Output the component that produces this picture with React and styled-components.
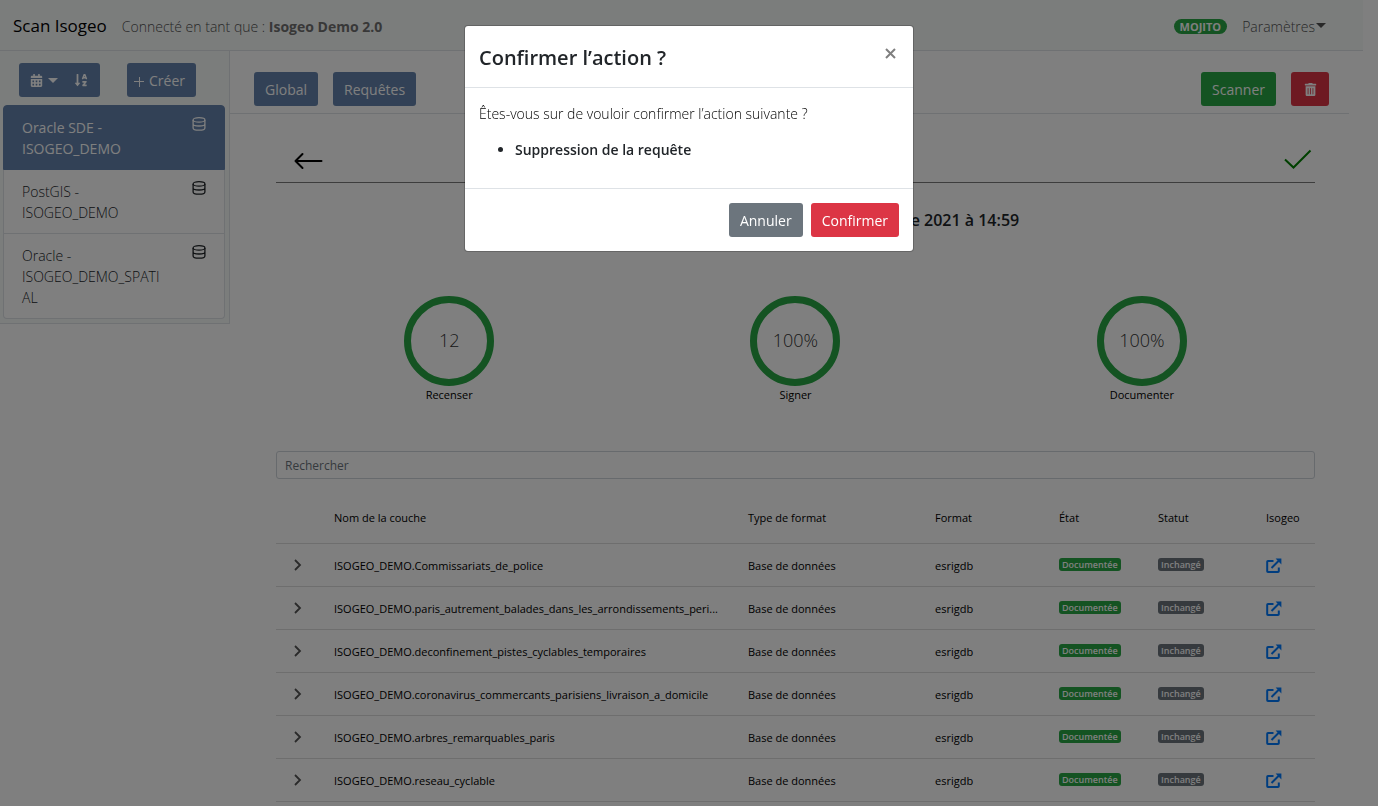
import React from 'react';
import styled, { createGlobalStyle, css } from 'styled-components';
import { FaCalendarAlt, FaSortAlphaDown, FaTrashAlt } from 'react-icons/fa';

const Global = createGlobalStyle`
  *, *::before, *::after { box-sizing: border-box; }
  html { font-size: 14px; }
  body {
    margin: 0;
    overflow: hidden;
    background: #fff;
    color: #212529;
    font-family: "Segoe UI", "Open Sans", "Noto Sans", sans-serif;
    font-size: 14px;
    font-weight: 400;
    line-height: 21px;
  }
  button, input { font: inherit; }
  button { cursor: pointer; }
`;

const Page = styled.div`
  padding-right: 15px;
`;

const Header = styled.header`
  display: flex;
  align-items: center;
  justify-content: space-between;
  height: 51px;
  padding: 2px 37px 0 13px;
  background: #f7faf9;
  border-bottom: 1px solid #dee2e6;
`;

const HeaderGroup = styled.div`
  display: flex;
  align-items: center;
  gap: 15px;
`;

const Brand = styled.a`
  color: #000;
  font-size: 17px;
  line-height: 26px;
  text-decoration: none;
`;

const Session = styled.span`
  color: #505050;
  font-weight: 300;
  strong { font-weight: 700; color: #707070; }
`;

const Caret = styled.span`
  display: inline-block;
  margin-left: 1px;
  vertical-align: 4px;
  border-top: 5px solid currentColor;
  border-left: 5px solid transparent;
  border-right: 5px solid transparent;
`;

const NavButton = styled.button`
  padding: 0;
  border: 0;
  background: none;
  color: #505050;
  font-weight: 300;
`;

const badgeColors = { success: '#28a745', secondary: '#6c757d' };

const Badge = styled.span`
  display: inline-block;
  padding: 2px 3px;
  border-radius: 3px;
  background: ${(p) => badgeColors[p.$tone]};
  color: #fff;
  font-size: 9px;
  font-weight: 600;
  line-height: 9px;
  vertical-align: 2px;
  ${(p) => p.$pill && css`
    padding: 2px 6px;
    border-radius: 10px;
    font-size: 11px;
    font-weight: 700;
    line-height: 11px;
  `}
`;

const Columns = styled.div`
  display: flex;
  align-items: flex-start;
`;

const Sidebar = styled.aside`
  flex: 0 0 230px;
  padding: 12px 4px 4px 3px;
  background: #f7faf9;
  border: solid #dee2e6;
  border-width: 0 1px 1px 0;
`;

const SidebarTools = styled.div`
  display: flex;
  gap: 27px;
  padding: 0 16px 8px;
`;

const ButtonGroup = styled.div`
  display: flex;
`;

const buttonColors = {
  primary: '#6483ac',
  success: '#28a745',
  danger: '#dc3545',
  secondary: '#6c757d',
};

const Button = styled.button`
  display: inline-flex;
  align-items: center;
  justify-content: center;
  gap: 4px;
  height: 34px;
  padding: 0 11px;
  border: 0;
  border-radius: 3px;
  background: ${(p) => buttonColors[p.$tone || 'primary']};
  color: #fff;
  font-size: 14px;
  white-space: nowrap;
  svg { display: block; }
`;

const GroupButton = styled(Button)`
  width: ${(p) => (p.$wide ? '50px' : '31px')};
  padding: ${(p) => (p.$wide ? '0' : '0 7px 0 0')};
  border-radius: ${(p) => (p.$wide ? '3px 0 0 3px' : '0 3px 3px 0')};
`;

const CreateButton = styled(Button)`
  gap: 5px;
  padding: 0 11px 0 7px;
`;

const SourceList = styled.ul`
  margin: 0;
  padding: 0;
  list-style: none;
`;

const Source = styled.li`
  border: 1px solid ${(p) => (p.$active ? '#6483ac' : '#dee2e6')};
  border-top-width: ${(p) => (p.$active ? '1px' : '0')};
  background: ${(p) => (p.$active ? '#6483ac' : '#fff')};
  color: ${(p) => (p.$active ? '#fff' : '#212529')};
  font-weight: ${(p) => (p.$active ? 400 : 300)};
  &:first-child { border-radius: 4px 4px 0 0; }
  &:last-child { border-radius: 0 0 4px 4px; }
`;

const SourceLink = styled.a`
  display: flex;
  justify-content: space-between;
  align-items: flex-start;
  padding: 11px 18px 10px;
  color: inherit;
  text-decoration: none;
  svg { flex: none; }
`;

const SourceName = styled.span`
  max-width: 142px;
  overflow-wrap: anywhere;
`;

const Main = styled.main`
  flex: 1;
  min-width: 0;
  padding-right: 14px;
`;

const Toolbar = styled.div`
  display: flex;
  justify-content: space-between;
  padding: 21px 20px 7px 24px;
  border-bottom: 1px solid #dee2e6;
`;

const ToolbarGroup = styled.div`
  display: flex;
  gap: 15px;
`;

const DeleteButton = styled(Button)`
  width: 38px;
`;

const Content = styled.section`
  padding: 0 34px 0 46px;
`;

const ScanBar = styled.div`
  display: flex;
  justify-content: space-between;
  align-items: center;
  height: 69px;
  padding: 22px 3px 0 17px;
  border-bottom: 1px solid #7a7a7a;
`;

const IconButton = styled.button`
  display: flex;
  padding: 0;
  border: 0;
  background: none;
  color: ${(p) => p.$color || '#000'};
`;

const ScanTitle = styled.h2`
  margin: 0;
  padding: 24px 0 62px;
  font-size: 16px;
  line-height: 27px;
  font-weight: 600;
  text-align: center;
  color: #212529;
`;

const Gauges = styled.div`
  display: grid;
  grid-template-columns: repeat(3, 1fr);
`;

const Gauge = styled.figure`
  display: flex;
  flex-direction: column;
  align-items: center;
  margin: 0;
`;

const GaugeRing = styled.div`
  display: flex;
  align-items: center;
  justify-content: center;
  width: 90px;
  height: 90px;
  padding-bottom: 2px;
  border: 7px solid #28a745;
  border-radius: 50%;
  color: #333;
  font-size: 18px;
  font-weight: 300;
`;

const GaugeLabel = styled.figcaption`
  color: #000;
  font-size: 11px;
  line-height: 18px;
`;

const Search = styled.input`
  display: block;
  width: 100%;
  height: 28px;
  margin: 47px 0 21px;
  padding: 0 8px;
  border: 1px solid #ced4da;
  border-radius: 3px;
  background: #fff;
  font-size: 12px;
  &::placeholder { color: #6c757d; opacity: 1; }
`;

const Table = styled.table`
  width: 100%;
  table-layout: fixed;
  border-collapse: separate;
  border-spacing: 0;
  color: #000;
  font-size: 11px;
`;

const Col = styled.col`
  width: ${(p) => p.$w};
`;

const HeadCell = styled.th`
  height: 44px;
  padding: 7px 0 0;
  border-bottom: 1px solid #dcdcdc;
  font-weight: 500;
  text-align: left;
  vertical-align: top;
  white-space: nowrap;
`;

const Cell = styled.td`
  height: 43px;
  padding: 0 28px 0 0;
  border-bottom: 1px solid #dcdcdc;
  overflow: hidden;
  text-overflow: ellipsis;
  white-space: nowrap;
`;

const ToggleCell = styled(Cell)`
  padding: 0 0 0 16px;
`;

const IsogeoLink = styled.a`
  display: flex;
  padding-top: 2px;
  color: #007bff;
`;

const Overlay = styled.div`
  position: fixed;
  inset: 0;
  display: flex;
  justify-content: center;
  align-items: flex-start;
  padding-top: 25px;
  background: rgba(0, 0, 0, 0.5);
`;

const Dialog = styled.div`
  width: 450px;
  border: 1px solid rgba(0, 0, 0, 0.2);
  border-radius: 4px;
  background: #fff;
  background-clip: padding-box;
`;

const DialogHeader = styled.div`
  display: flex;
  justify-content: space-between;
  align-items: flex-start;
  padding: 14px 17px 12px 14px;
  border-bottom: 1px solid #dee2e6;
`;

const DialogTitle = styled.h1`
  margin: 0;
  font-size: 20px;
  line-height: 35px;
  font-weight: 600;
`;

const CloseButton = styled(IconButton)`
  padding: 8px 0;
  color: #7f7f7f;
`;

const DialogBody = styled.div`
  padding: 15px 14px 28px;
  p { margin: 0 0 15px; font-weight: 300; color: #000; }
  ul { margin: 0; padding-left: 36px; }
  li { font-weight: 600; }
`;

const DialogFooter = styled.div`
  display: flex;
  justify-content: flex-end;
  gap: 8px;
  padding: 14px;
  border-top: 1px solid #dee2e6;
`;

const DatabaseIcon = () => (
  <svg width="14" height="15" viewBox="0 0 14 15" fill="none" stroke="currentColor" strokeWidth="1.3" aria-hidden="true">
    <ellipse cx="7" cy="2.900" rx="5.900" ry="2.200" />
    <path d="M1.100 2.900v8c0 1.300 2.400 2.200 5.900 2.200s5.900-.9 5.900-2.200v-8M1.100 6.900c0 1.300 2.400 2.100 5.900 2.100s5.900-.8 5.900-2.100" />
  </svg>
);

const ArrowLeftIcon = () => (
  <svg width="30" height="22" viewBox="0 0 30 22" fill="none" stroke="currentColor" strokeWidth="2" strokeLinecap="round" strokeLinejoin="round" aria-hidden="true">
    <path d="M9.500 6 2.500 13l7 7M2.500 13h26" />
  </svg>
);

const CheckIcon = () => (
  <svg width="28" height="22" viewBox="0 0 28 22" fill="none" stroke="currentColor" strokeWidth="2" aria-hidden="true">
    <path d="M1 11.500 9.500 19.500 26.500 2.500" />
  </svg>
);

const PlusIcon = () => (
  <svg width="10" height="14" viewBox="0 0 10 14" fill="none" stroke="currentColor" aria-hidden="true">
    <path d="M5.500 4v10M0 8.500h10" />
  </svg>
);

const CloseIcon = () => (
  <svg width="11" height="11" viewBox="0 0 11 11" fill="none" stroke="currentColor" strokeWidth="2" aria-hidden="true">
    <path d="m1 1 9 9M10 1l-9 9" />
  </svg>
);

const ChevronIcon = () => (
  <svg width="11" height="12" viewBox="0 0 11 12" fill="none" stroke="currentColor" strokeWidth="1.800" aria-hidden="true">
    <path d="m3 1 5 5-5 5" />
  </svg>
);

const ExternalIcon = () => (
  <svg width="16" height="16" viewBox="0 0 16 16" fill="none" stroke="currentColor" strokeWidth="2" aria-hidden="true">
    <path d="M7.500 3H2a.8.8 0 0 0-.8.800V13.200a.8.800 0 0 0 .8.800h10a.8.800 0 0 0 .8-.800V9.500M5.500 10 13 2.500" />
    <path d="M9.600.6H15.400V6.400z" fill="currentColor" stroke="none" />
  </svg>
);

const sources = [
  { name: 'Oracle SDE - ISOGEO_DEMO', active: true },
  { name: 'PostGIS - ISOGEO_DEMO' },
  { name: 'Oracle - ISOGEO_DEMO_SPATIAL' },
];

const gauges = [
  { value: '12', label: 'Recenser' },
  { value: '100%', label: 'Signer' },
  { value: '100%', label: 'Documenter' },
];

const layers = [
  'ISOGEO_DEMO.Commissariats_de_police',
  'ISOGEO_DEMO.paris_autrement_balades_dans_les_arrondissements_peri...',
  'ISOGEO_DEMO.deconfinement_pistes_cyclables_temporaires',
  'ISOGEO_DEMO.coronavirus_commercants_parisiens_livraison_a_domicile',
  'ISOGEO_DEMO.arbres_remarquables_paris',
  'ISOGEO_DEMO.reseau_cyclable',
];

export default function App() {
  return (
    <>
      <Global />
      <Page>
        <Header>
          <HeaderGroup>
            <Brand href="#">Scan Isogeo</Brand>
            <Session>Connecté en tant que : <strong>Isogeo Demo 2.0</strong></Session>
          </HeaderGroup>
          <HeaderGroup>
            <Badge $tone="success" $pill>MOJITO</Badge>
            <NavButton type="button">Paramètres<Caret /></NavButton>
          </HeaderGroup>
        </Header>

        <Columns>
          <Sidebar>
            <SidebarTools>
              <ButtonGroup>
                <GroupButton type="button" $wide aria-label="Trier par date">
                  <FaCalendarAlt size={13} /><Caret />
                </GroupButton>
                <GroupButton type="button" aria-label="Tri alphabétique">
                  <FaSortAlphaDown size={14} />
                </GroupButton>
              </ButtonGroup>
              <CreateButton type="button"><PlusIcon />Créer</CreateButton>
            </SidebarTools>
            <SourceList>
              {sources.map((s) => (
                <Source key={s.name} $active={s.active}>
                  <SourceLink href="#">
                    <SourceName>{s.name}</SourceName>
                    <DatabaseIcon />
                  </SourceLink>
                </Source>
              ))}
            </SourceList>
          </Sidebar>

          <Main>
            <Toolbar>
              <ToolbarGroup>
                <Button type="button">Global</Button>
                <Button type="button">Requêtes</Button>
              </ToolbarGroup>
              <ToolbarGroup>
                <Button type="button" $tone="success">Scanner</Button>
                <DeleteButton type="button" $tone="danger" aria-label="Supprimer">
                  <FaTrashAlt size={13} />
                </DeleteButton>
              </ToolbarGroup>
            </Toolbar>

            <Content>
              <ScanBar>
                <IconButton type="button" aria-label="Retour"><ArrowLeftIcon /></IconButton>
                <IconButton type="button" aria-label="Valider" $color="#008000"><CheckIcon /></IconButton>
              </ScanBar>
              <ScanTitle>Dernier scan effectué le samedi 18 décembre 2021 à 14:59</ScanTitle>
              <Gauges>
                {gauges.map((g) => (
                  <Gauge key={g.label}>
                    <GaugeRing>{g.value}</GaugeRing>
                    <GaugeLabel>{g.label}</GaugeLabel>
                  </Gauge>
                ))}
              </Gauges>
              <Search type="search" placeholder="Rechercher" aria-label="Rechercher" />
              <Table>
                <colgroup>
                  <Col $w="58px" />
                  <Col />
                  <Col $w="187px" />
                  <Col $w="124px" />
                  <Col $w="99px" />
                  <Col $w="108px" />
                  <Col $w="49px" />
                </colgroup>
                <thead>
                  <tr>
                    <HeadCell aria-label="Détails" />
                    <HeadCell>Nom de la couche</HeadCell>
                    <HeadCell>Type de format</HeadCell>
                    <HeadCell>Format</HeadCell>
                    <HeadCell>État</HeadCell>
                    <HeadCell>Statut</HeadCell>
                    <HeadCell>Isogeo</HeadCell>
                  </tr>
                </thead>
                <tbody>
                  {layers.map((name) => (
                    <tr key={name}>
                      <ToggleCell>
                        <IconButton type="button" $color="#555" aria-label="Développer"><ChevronIcon /></IconButton>
                      </ToggleCell>
                      <Cell>{name}</Cell>
                      <Cell>Base de données</Cell>
                      <Cell>esrigdb</Cell>
                      <Cell><Badge $tone="success">Documentée</Badge></Cell>
                      <Cell><Badge $tone="secondary">Inchangé</Badge></Cell>
                      <Cell><IsogeoLink href="#" aria-label="Ouvrir dans Isogeo"><ExternalIcon /></IsogeoLink></Cell>
                    </tr>
                  ))}
                </tbody>
              </Table>
            </Content>
          </Main>
        </Columns>
      </Page>

      <Overlay>
        <Dialog role="dialog" aria-modal="true" aria-labelledby="confirm-title">
          <DialogHeader>
            <DialogTitle id="confirm-title">Confirmer l’action ?</DialogTitle>
            <CloseButton type="button" aria-label="Fermer"><CloseIcon /></CloseButton>
          </DialogHeader>
          <DialogBody>
            <p>Êtes-vous sur de vouloir confirmer l’action suivante ?</p>
            <ul><li>Suppression de la requête</li></ul>
          </DialogBody>
          <DialogFooter>
            <Button type="button" $tone="secondary">Annuler</Button>
            <Button type="button" $tone="danger">Confirmer</Button>
          </DialogFooter>
        </Dialog>
      </Overlay>
    </>
  );
}
